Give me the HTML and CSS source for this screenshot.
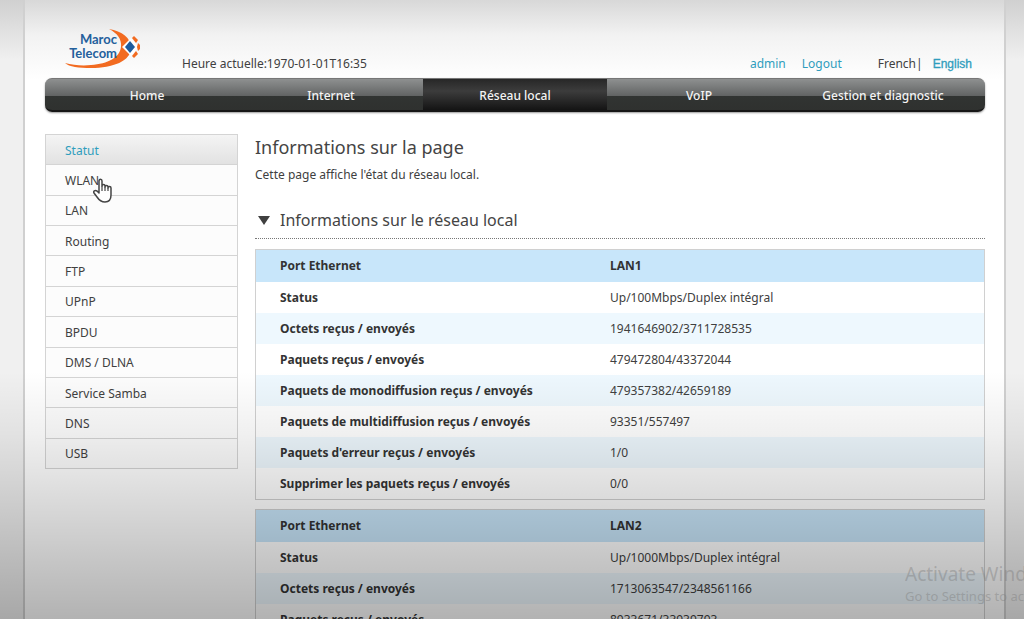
FILE: index.html
```html
<!DOCTYPE html>
<html lang="fr">
<head>
<meta charset="utf-8">
<title>Maroc Telecom - Réseau local</title>
<link rel="stylesheet" href="styles.css">
</head>
<body>
<div class="page">
  <header class="header">
    <svg class="logo" width="76" height="42" viewBox="0 0 76 42" role="img" aria-label="Maroc Telecom">
      <path fill="#f26b21" d="M44 1C57 3 66 10 66 20C66 33 48 40 26 40C14 40 4 39 0 35C8 37 17 38 26 37C43 36 55 29 56 19C57 11 52 5 44 1Z"/>
      <path fill="#fff" d="M66 10L74 19L66 28L57 19Z"/>
      <path fill="#1d5c9e" d="M65 13L70 19L65 25L60 19Z"/>
      <path fill="#f26b21" d="M67 10L69 8L73 12L71 15ZM73 15L75 17V21L73 23L72 19ZM67 28L71 23L73 26L69 30Z"/>
      <text class="logo-text" x="52" y="16">Maroc</text>
      <text class="logo-text" x="52" y="30">Telecom</text>
    </svg>
    <span class="clock">Heure actuelle:1970-01-01T16:35</span>
    <div class="account">
      <a href="#">admin</a>
      <a href="#">Logout</a>
    </div>
    <div class="languages"><span>French|</span><a class="lang-link" href="#">English</a></div>
  </header>

  <nav class="nav">
    <a href="#">Home</a>
    <a href="#">Internet</a>
    <a class="active" href="#">Réseau local</a>
    <a href="#">VoIP</a>
    <a href="#">Gestion et diagnostic</a>
  </nav>

  <div class="columns">
    <nav class="side">
      <a class="current" href="#">Statut</a>
      <a href="#">WLAN</a>
      <a href="#">LAN</a>
      <a href="#">Routing</a>
      <a href="#">FTP</a>
      <a href="#">UPnP</a>
      <a href="#">BPDU</a>
      <a href="#">DMS / DLNA</a>
      <a href="#">Service Samba</a>
      <a href="#">DNS</a>
      <a href="#">USB</a>
    </nav>

    <main class="content">
      <h1>Informations sur la page</h1>
      <p class="intro">Cette page affiche l'état du réseau local.</p>
      <h2><span class="triangle"></span>Informations sur le réseau local</h2>

      <table class="port">
        <thead><tr><th scope="col">Port Ethernet</th><th scope="col">LAN1</th></tr></thead>
        <tbody>
          <tr><th scope="row">Status</th><td>Up/100Mbps/Duplex intégral</td></tr>
          <tr><th scope="row">Octets reçus / envoyés</th><td>1941646902/3711728535</td></tr>
          <tr><th scope="row">Paquets reçus / envoyés</th><td>479472804/43372044</td></tr>
          <tr><th scope="row">Paquets de monodiffusion reçus / envoyés</th><td>479357382/42659189</td></tr>
          <tr><th scope="row">Paquets de multidiffusion reçus / envoyés</th><td>93351/557497</td></tr>
          <tr><th scope="row">Paquets d'erreur reçus / envoyés</th><td>1/0</td></tr>
          <tr><th scope="row">Supprimer les paquets reçus / envoyés</th><td>0/0</td></tr>
        </tbody>
      </table>

      <table class="port">
        <thead><tr><th scope="col">Port Ethernet</th><th scope="col">LAN2</th></tr></thead>
        <tbody>
          <tr><th scope="row">Status</th><td>Up/1000Mbps/Duplex intégral</td></tr>
          <tr><th scope="row">Octets reçus / envoyés</th><td>1713063547/2348561166</td></tr>
          <tr><th scope="row">Paquets reçus / envoyés</th><td>8933671/33939793</td></tr>
        </tbody>
      </table>
    </main>
  </div>
</div>

<div class="shade"></div>
<div class="watermark"><div class="watermark-title">Activate Windows</div><div>Go to Settings to activate Windows.</div></div>
<svg class="pointer" width="20" height="26" viewBox="0 0 20 26" aria-hidden="true">
  <path fill="#fff" stroke="#444" stroke-width="1.5" stroke-linejoin="round" d="M6 15V3C6 .6 9 .6 9 3V8C9 6 12 6 12 8V9C12 7 15 7 15 9V10C15 8 18 8 18 10V17C18 21 16 24 12 24C8 24 6 22 4 19L1 15C0 13 2 12 4 13Z"/>
  <path fill="none" stroke="#444" stroke-width="1.2" d="M9 8V13M12 9V13M15 10V13"/>
</svg>
</body>
</html>
```

FILE: styles.css
```css
* { box-sizing: border-box; }

body {
  margin: 0;
  height: 100vh;
  overflow: hidden;
  position: relative;
  background: linear-gradient(#d0d0d0, #f0f0f0 60px);
  font-family: "Noto Sans", "Open Sans", sans-serif;
  font-size: 12px;
  line-height: 16px;
  color: #404040;
}

a { color: #2f9dbd; text-decoration: none; }

.page {
  min-height: 100vh;
  margin: 0 18px 0 23px;
  padding: 0 19px 0 20px;
  border: solid #d0d0d0;
  border-width: 0 2px;
  background: linear-gradient(#d8d8d8, #f2f2f2 35px, #fff 80px);
}

.header {
  display: flex;
  align-items: flex-end;
  height: 78px;
  padding: 0 13px 6px 20px;
}
.logo { margin-bottom: 2px; overflow: visible; }
.logo-text {
  font: bold 13px Lato, sans-serif;
  text-anchor: end;
  fill: #24609c;
}
.clock { margin-left: 41px; }
.account { display: flex; gap: 16px; margin-left: auto; }
.languages { display: flex; gap: 10px; margin-left: 36px; }
.lang-link { font-family: "Liberation Sans", Arial, sans-serif; -webkit-text-stroke: 0.3px; }

.nav {
  display: flex;
  height: 34px;
  padding: 0 10px;
  border-radius: 7px;
  border-top: 1px solid #777;
  border-bottom: 2px solid #161616;
  background: linear-gradient(#8e9090, #616363 17px, #313432 17px, #2f312f);
  box-shadow: 0 1px 2px #999;
}
.nav a {
  flex: 1;
  color: #f4f4f4;
  text-align: center;
  line-height: 33px;
  font-weight: 500;
}
.nav .active { background: linear-gradient(#272727, #3c3c3c 12px, #141414); }

.columns { display: flex; gap: 17px; padding-top: 22px; align-items: flex-start; }

.side {
  display: flex;
  flex-direction: column;
  flex: none;
  width: 193px;
  height: 335px;
  border: 1px solid #d4d4d4;
  background: #fcfcfc;
}
.side a {
  flex: 1;
  display: flex;
  align-items: center;
  padding: 2px 0 0 19px;
  color: #404040;
  border-bottom: 1px solid #d4d4d4;
}
.side a:last-child { border-bottom: 0; }
.side .current { color: #2f9dbd; background: linear-gradient(#f4f4f4, #e2e2e2); }

.content { flex: 1; }
h1, h2 { margin: 0; font-weight: 400; color: #444; }
h1 { font-size: 18px; line-height: 26px; }
.intro { margin: 7px 0 0; }
h2 {
  display: flex;
  align-items: center;
  gap: 10px;
  margin: 22px 0 10px;
  padding: 0 0 3px 3px;
  font-size: 16px;
  line-height: 30px;
  border-bottom: 1px dotted #777;
}
.triangle {
  border: solid transparent;
  border-width: 9px 6px 0;
  border-top-color: #404040;
}

.port {
  width: 100%;
  margin-bottom: 9px;
  table-layout: fixed;
  border: 1px solid #d0d0d0;
  border-spacing: 0;
  background: #fff;
}
.port th, .port td { height: 31px; padding: 0 0 0 24px; text-align: left; }
.port th:first-child { width: 330px; color: #333; }
.port thead th { height: 32px; background: #c8e6fa; color: #333; }
.port tbody tr:nth-child(even) { background: #eef8fe; }

.shade {
  position: absolute;
  inset: 0;
  pointer-events: none;
  background: linear-gradient(transparent 60%, rgba(0, 0, 0, .06) 70%, rgba(0, 0, 0, .12) 78%, rgba(0, 0, 0, .3));
}
.watermark {
  position: absolute;
  left: calc(100% - 119px);
  right: 0;
  bottom: 15px;
  overflow: hidden;
  white-space: nowrap;
  font-size: 13px;
  color: rgba(120, 120, 120, .4);
}
.watermark-title { font-size: 19px; line-height: 28px; }
.pointer { position: absolute; left: 93px; top: 178px; }
```
